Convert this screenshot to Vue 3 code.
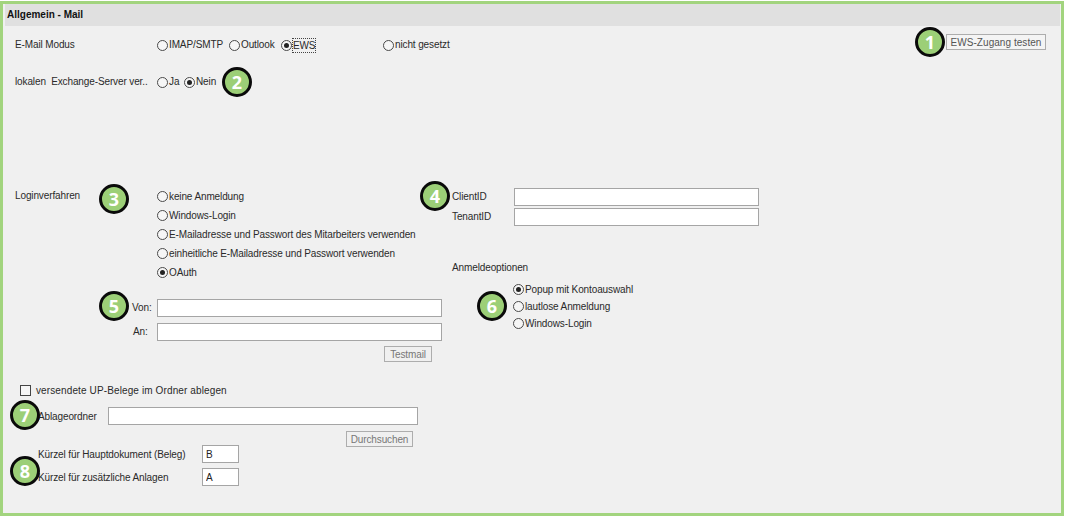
<script setup>
const badges = [
  { n: 1, x: 930, y: 38 },
  { n: 2, x: 237, y: 78 },
  { n: 3, x: 114, y: 195 },
  { n: 4, x: 435, y: 192 },
  { n: 5, x: 114, y: 302 },
  { n: 6, x: 492, y: 302 },
  { n: 7, x: 25, y: 411 },
  { n: 8, x: 25, y: 467 },
]
const logins = [
  { t: 'keine Anmeldung' },
  { t: 'Windows-Login' },
  { t: 'E-Mailadresse und Passwort des Mitarbeiters verwenden' },
  { t: 'einheitliche E-Mailadresse und Passwort verwenden' },
  { t: 'OAuth', on: true },
]
const options = [
  { t: 'Popup mit Kontoauswahl', on: true },
  { t: 'lautlose Anmeldung' },
  { t: 'Windows-Login' },
]
</script>

<template>
  <div class="frame">
    <div class="title">Allgemein - Mail</div>
    <div class="content">
      <div class="row row-mode">
        <div class="label-main">E-Mail Modus</div>
        <div class="mode-grid">
          <span class="radio"><i class="dot"></i>IMAP/SMTP</span>
          <span class="radio"><i class="dot"></i>Outlook</span>
          <span class="radio"><i class="dot on"></i><span class="focus">EWS</span></span>
          <span class="radio"><i class="dot"></i>nicht gesetzt</span>
        </div>
        <button class="btn btn-ews">EWS-Zugang testen</button>
      </div>
      <div class="row row-local">
        <div class="label-main">lokalen&nbsp; Exchange-Server ver..</div>
        <div class="local-grid">
          <span class="radio"><i class="dot"></i>Ja</span>
          <span class="radio"><i class="dot on"></i>Nein</span>
        </div>
      </div>

      <div class="columns">
        <div class="col-left">
          <div class="login">
            <div class="label-main label-login">Loginverfahren</div>
            <div class="login-list">
              <div v-for="l in logins" :key="l.t" class="radio login-item">
                <i class="dot" :class="{ on: l.on }"></i>{{ l.t }}
              </div>
            </div>
          </div>
          <div class="mail-row first">
            <span class="mail-label">Von:</span>
            <input class="field mail-input" />
          </div>
          <div class="mail-row second">
            <span class="mail-label an">An:</span>
            <input class="field mail-input" />
          </div>
          <button class="btn btn-testmail">Testmail</button>
        </div>
        <div class="col-right">
          <div class="id-row">
            <span class="id-label">ClientID</span>
            <input class="field id-input" />
          </div>
          <div class="id-row second-id">
            <span class="id-label">TenantID</span>
            <input class="field id-input" />
          </div>
          <div class="opt-title">Anmeldeoptionen</div>
          <div class="opt-list">
            <div v-for="o in options" :key="o.t" class="radio opt-item">
              <i class="dot" :class="{ on: o.on }"></i>{{ o.t }}
            </div>
          </div>
        </div>
      </div>

      <div class="archive">
        <div class="check-row"><i class="check"></i><span class="check-text">versendete UP-Belege im Ordner ablegen</span></div>
        <div class="folder-row">
          <span class="folder-label">Ablageordner</span>
          <input class="field folder-input" />
        </div>
        <button class="btn btn-browse">Durchsuchen</button>
        <div class="short-row short-first">
          <span class="short-label">Kürzel für Hauptdokument (Beleg)</span>
          <input class="field short-input" value="B" />
        </div>
        <div class="short-row short-second">
          <span class="short-label">Kürzel für zusätzliche Anlagen</span>
          <input class="field short-input" value="A" />
        </div>
      </div>
    </div>

    <div
      v-for="b in badges"
      :key="b.n"
      class="badge"
      :style="{ left: b.x - 18 + 'px', top: b.y - 15 + 'px' }"
    >{{ b.n }}</div>
  </div>
</template>

<style>
html, body { margin: 0; background: #fff; }
</style>

<style scoped>
.frame {
  position: relative;
  box-sizing: border-box;
  width: 1064px;
  height: 515px;
  margin-top: 1px;
  border: 3px solid #a2d47e;
  background: #f0f0f0;
  overflow: hidden;
  font: 10px/14px "Liberation Sans", Arial, sans-serif;
  letter-spacing: -0.12px;
  color: #2a2a2a;
}
.title {
  height: 22px;
  margin: 0 1px 0 2px;
  padding-left: 2px;
  background: #e0e0e0;
  font-weight: 700;
  line-height: 21px;
  letter-spacing: 0;
  color: #111;
}
.content {
  padding: 10px 15px 0 12px;
}
.row { display: flex; align-items: center; height: 18px; }
.row-local { margin-top: 19px; }
.label-main { width: 142px; flex: none; white-space: nowrap; }
.row-mode .label-main { margin-top: -1px; }
.mode-grid { display: grid; grid-template-columns: 72px 52px 102px auto; }
.local-grid { display: grid; grid-template-columns: 27px auto; }
.radio { display: flex; align-items: center; white-space: nowrap; }
.dot {
  position: relative;
  box-sizing: border-box;
  flex: none;
  width: 11px;
  height: 11px;
  margin-right: 1px;
  border: 1px solid #4a4a4a;
  border-radius: 50%;
  background: #f6f6f6;
}
.dot.on::after {
  content: "";
  position: absolute;
  left: 2px;
  top: 2px;
  width: 5px;
  height: 5px;
  border-radius: 50%;
  background: #222;
}
.focus { outline: 1px dotted #444; outline-offset: 0; line-height: 13px; }
.btn {
  box-sizing: border-box;
  display: block;
  height: 16px;
  padding: 0;
  border: 1px solid #adadad;
  border-radius: 0;
  background: #f0f0f0;
  font: inherit;
  letter-spacing: inherit;
  line-height: 13px;
  color: #777;
}
.btn-ews { width: 100px; margin-left: auto; margin-top: -6px; color: #555; background: #f4f4f4; letter-spacing: 0.05px; }
.columns { display: flex; margin-top: 97px; }
.col-left { width: 437px; flex: none; }
.login { display: flex; }
.label-login { margin-top: 1px; }
.login-list { margin-top: -1px; }
.login-item { height: 19px; }
.mail-row { display: flex; align-items: center; height: 18px; }
.mail-row.first { margin-top: 17px; }
.mail-row.second { margin-top: 6px; }
.mail-label { width: 142px; padding-left: 117px; box-sizing: border-box; flex: none; }
.mail-label.an { padding-left: 118px; }
.field {
  box-sizing: border-box;
  display: block;
  height: 18px;
  padding: 0 3px;
  border: 1px solid #a5a5a5;
  border-radius: 0;
  outline: none;
  background: #fff;
  font: inherit;
  letter-spacing: inherit;
  color: #222;
}
.mail-input { width: 285px; }
.btn-testmail { width: 48px; height: 16px; margin: 5px 0 0 369px; }
.id-row { display: flex; align-items: center; height: 18px; }
.second-id { margin-top: 2px; }
.id-label { width: 62px; flex: none; }
.id-input { width: 245px; }
.opt-title { margin-top: 34px; height: 16px; line-height: 16px; }
.opt-list { margin: 5px 0 0 61px; }
.opt-item { height: 17px; }
.archive { margin-top: 20px; }
.check-row { display: flex; align-items: center; height: 16px; padding-left: 5px; }
.check-text { margin-top: 2px; letter-spacing: 0.12px; }
.check {
  box-sizing: border-box;
  width: 11px;
  height: 11px;
  margin-right: 5px;
  border: 1px solid #444;
  background: #f6f6f6;
}
.folder-row { display: flex; align-items: center; height: 18px; margin-top: 9px; padding-left: 23px; }
.folder-label { width: 70px; flex: none; padding-top: 2px; }
.folder-input { width: 310px; }
.btn-browse { width: 67px; margin: 6px 0 0 331px; }
.short-row { display: flex; align-items: center; height: 18px; padding-left: 23px; }
.short-first { margin-top: -2px; }
.short-second { margin-top: 5px; }
.short-label { width: 164px; flex: none; padding-top: 2px; }
.short-input { width: 37px; }
.badge {
  position: absolute;
  box-sizing: border-box;
  width: 30px;
  height: 30px;
  border: 3px solid #0a0a0a;
  border-radius: 50%;
  background: #9ccf77;
  color: #fff;
  font: 700 18px/24px "Open Sans", sans-serif;
  letter-spacing: 0;
  text-align: center;
}
</style>
